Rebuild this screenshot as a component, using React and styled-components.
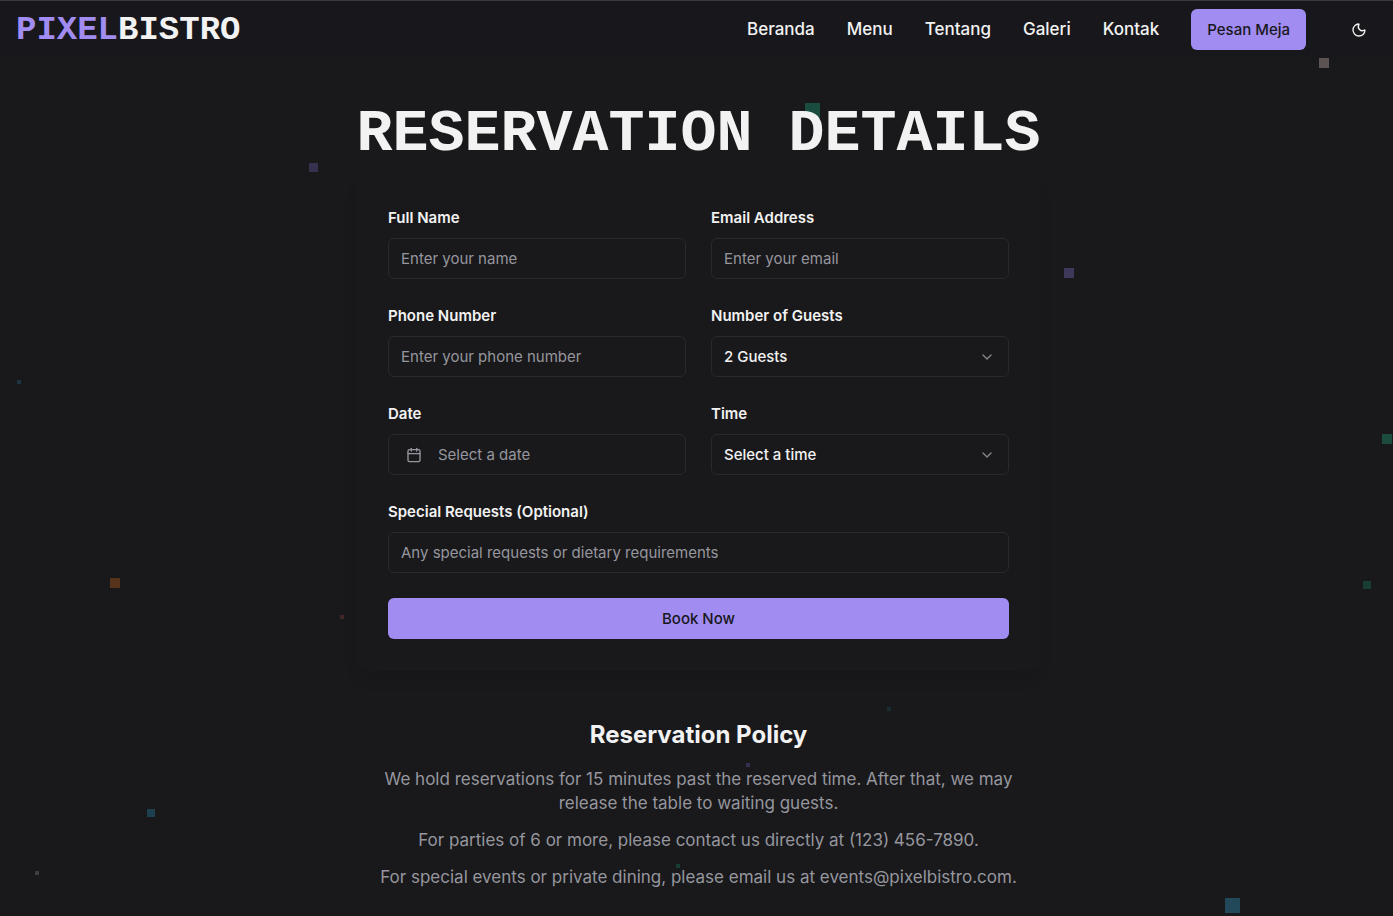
import React, { useState } from "react";
import styled, { createGlobalStyle } from "styled-components";
import { Moon, Calendar, ChevronDown } from "lucide-react";

const GlobalStyle = createGlobalStyle`
  *, *::before, *::after { box-sizing: border-box; }
  body {
    margin: 0;
    background: #19191b;
    color: #f2f2f2;
    font-family: Inter, "Open Sans", sans-serif;
    font-size: 16px;
    line-height: 24px;
    overflow-x: hidden;
  }
`;

const Page = styled.div`
  position: relative;
  min-height: 100vh;
  overflow: hidden;
`;

const Particle = styled.span`
  position: absolute;
  width: ${(p) => p.$size}px;
  height: ${(p) => p.$size}px;
  background: ${(p) => p.$color};
`;

const Header = styled.header`
  position: relative;
  display: flex;
  align-items: center;
  justify-content: space-between;
  padding: 8px 14px 8px 16px;
  background: #18181c;
  border-top: 1px solid #3a3a3a;
`;

const Logo = styled.a`
  font-family: "Liberation Mono", monospace;
  font-size: 34px;
  font-weight: 700;
  line-height: 40px;
  color: #f2f2f2;
  text-decoration: none;
`;

const LogoAccent = styled.span`
  color: #a18cf2;
`;

const Nav = styled.nav`
  display: flex;
  align-items: center;
  gap: 32px;
`;

const NavLink = styled.a`
  padding-bottom: 2px;
  font-size: 17px;
  font-weight: 500;
  color: #f2f2f2;
  text-decoration: none;
`;

const PrimaryButton = styled.button`
  width: ${(p) => (p.$block ? "100%" : "auto")};
  height: 41px;
  padding: 0 16px;
  border: 0;
  border-radius: 6px;
  background: #a18cf2;
  color: #18181b;
  font: 500 15px/20px Inter, sans-serif;
`;

const IconButton = styled.button`
  display: flex;
  align-items: center;
  justify-content: center;
  width: 41px;
  height: 41px;
  padding: 0;
  border: 0;
  background: transparent;
  color: #f2f2f2;
`;

const Main = styled.main`
  position: relative;
  display: flex;
  flex-direction: column;
  align-items: center;
  padding: 52px 16px 24px 20px;
`;

const Title = styled.h1`
  margin: 0 0 16px;
  font-family: "Liberation Mono", monospace;
  font-size: 60px;
  font-weight: 700;
  line-height: 48px;
  text-align: center;
`;

const Card = styled.form`
  display: grid;
  grid-template-columns: 1fr 1fr;
  gap: 25px;
  width: 100%;
  max-width: 685px;
  padding: 32px;
  border-radius: 12px;
  box-shadow: 0 10px 15px -3px rgba(0, 0, 0, 0.1);
`;

const Field = styled.div`
  display: flex;
  flex-direction: column;
  gap: 8px;
  min-width: 0;
  grid-column: ${(p) => (p.$wide ? "1 / -1" : "auto")};
`;

const Label = styled.label`
  font-size: 15px;
  font-weight: 600;
  line-height: 24px;
`;

const Control = styled.div`
  display: flex;
  position: relative;
  align-items: center;
  height: 41px;
  border: 1px solid #29292c;
  border-radius: 6px;
  color: #a1a1aa;
`;

const TextInput = styled.input`
  width: 100%;
  height: 100%;
  padding: 0 12px;
  border: 0;
  border-radius: 6px;
  background: transparent;
  color: #f2f2f2;
  font: 400 15px/20px Inter, sans-serif;
  &::placeholder { color: #96969e; opacity: 1; }
`;

const Select = styled.select`
  appearance: none;
  width: 100%;
  height: 100%;
  padding: 0 40px 0 12px;
  border: 0;
  border-radius: 6px;
  background: transparent;
  color: #f2f2f2;
  font: 500 15px/20px Inter, sans-serif;
  option { background: #19191b; }
`;

const Chevron = styled(ChevronDown)`
  position: absolute;
  right: 13px;
  pointer-events: none;
  opacity: 0.8;
`;

const DateButton = styled.button`
  display: flex;
  align-items: center;
  gap: 16px;
  width: 100%;
  height: 100%;
  padding: 0 17px;
  border: 0;
  background: transparent;
  color: #96969e;
  font: 400 15px/20px Inter, sans-serif;
`;

const Submit = styled.div`
  grid-column: 1 / -1;
`;

const Policy = styled.section`
  width: 100%;
  max-width: 685px;
  padding: 48px 16px 0;
  text-align: center;
`;

const PolicyTitle = styled.h2`
  margin: 0 0 16px;
  font-size: 24px;
  font-weight: 700;
  line-height: 32px;
`;

const PolicyText = styled.p`
  margin: 0 0 13px;
  font-size: 17px;
  line-height: 24px;
  color: #96969e;
`;

const particles = [
  { x: 1319, y: 58, size: 10, color: "#5d5353" },
  { x: 805, y: 103, size: 15, color: "#1a4d40" },
  { x: 309, y: 163, size: 9, color: "#37314f" },
  { x: 1064, y: 268, size: 10, color: "#3e385b" },
  { x: 17, y: 380, size: 4, color: "#1c353f" },
  { x: 1382, y: 434, size: 10, color: "#1b4c3e" },
  { x: 110, y: 578, size: 10, color: "#57331c" },
  { x: 340, y: 615, size: 4, color: "#41262a" },
  { x: 1363, y: 581, size: 8, color: "#183d34" },
  { x: 887, y: 707, size: 4, color: "#1b2c34" },
  { x: 746, y: 763, size: 4, color: "#352f50" },
  { x: 147, y: 809, size: 8, color: "#1e3f4d" },
  { x: 35, y: 871, size: 4, color: "#403d42" },
  { x: 676, y: 864, size: 4, color: "#173d34" },
  { x: 1225, y: 898, size: 15, color: "#22495a" },
];

const links = ["Beranda", "Menu", "Tentang", "Galeri", "Kontak"];

export default function App() {
  const [guests, setGuests] = useState("2 Guests");
  const [time, setTime] = useState("Select a time");
  return (
    <Page>
      <GlobalStyle />
      {particles.map((p) => (
        <Particle key={`${p.x}-${p.y}`} aria-hidden="true" $size={p.size} $color={p.color} style={{ left: p.x, top: p.y }} />
      ))}
      <Header>
        <Logo href="#home"><LogoAccent>PIXEL</LogoAccent>BISTRO</Logo>
        <Nav>
          {links.map((l) => <NavLink key={l} href={`#${l.toLowerCase()}`}>{l}</NavLink>)}
          <PrimaryButton type="button">Pesan Meja</PrimaryButton>
          <IconButton type="button" aria-label="Toggle theme"><Moon size={16} /></IconButton>
        </Nav>
      </Header>
      <Main>
        <Title>RESERVATION DETAILS</Title>
        <Card onSubmit={(e) => e.preventDefault()}>
          <Field>
            <Label htmlFor="name">Full Name</Label>
            <Control><TextInput id="name" placeholder="Enter your name" /></Control>
          </Field>
          <Field>
            <Label htmlFor="email">Email Address</Label>
            <Control><TextInput id="email" type="email" placeholder="Enter your email" /></Control>
          </Field>
          <Field>
            <Label htmlFor="phone">Phone Number</Label>
            <Control><TextInput id="phone" type="tel" placeholder="Enter your phone number" /></Control>
          </Field>
          <Field>
            <Label htmlFor="guests">Number of Guests</Label>
            <Control>
              <Select id="guests" value={guests} onChange={(e) => setGuests(e.target.value)}>
                <option>1 Guest</option>
                <option>2 Guests</option>
                <option>3 Guests</option>
                <option>4 Guests</option>
              </Select>
              <Chevron size={16} />
            </Control>
          </Field>
          <Field>
            <Label htmlFor="date">Date</Label>
            <Control><DateButton id="date" type="button"><Calendar size={16} />Select a date</DateButton></Control>
          </Field>
          <Field>
            <Label htmlFor="time">Time</Label>
            <Control>
              <Select id="time" value={time} onChange={(e) => setTime(e.target.value)}>
                <option>Select a time</option>
                <option>18:00</option>
                <option>19:00</option>
                <option>20:00</option>
              </Select>
              <Chevron size={16} />
            </Control>
          </Field>
          <Field $wide>
            <Label htmlFor="requests">Special Requests (Optional)</Label>
            <Control><TextInput id="requests" placeholder="Any special requests or dietary requirements" /></Control>
          </Field>
          <Submit><PrimaryButton $block type="submit">Book Now</PrimaryButton></Submit>
        </Card>
        <Policy>
          <PolicyTitle>Reservation Policy</PolicyTitle>
          <PolicyText>We hold reservations for 15 minutes past the reserved time. After that, we may release the table to waiting guests.</PolicyText>
          <PolicyText>For parties of 6 or more, please contact us directly at (123) 456-7890.</PolicyText>
          <PolicyText>For special events or private dining, please email us at events@pixelbistro.com.</PolicyText>
        </Policy>
      </Main>
    </Page>
  );
}
